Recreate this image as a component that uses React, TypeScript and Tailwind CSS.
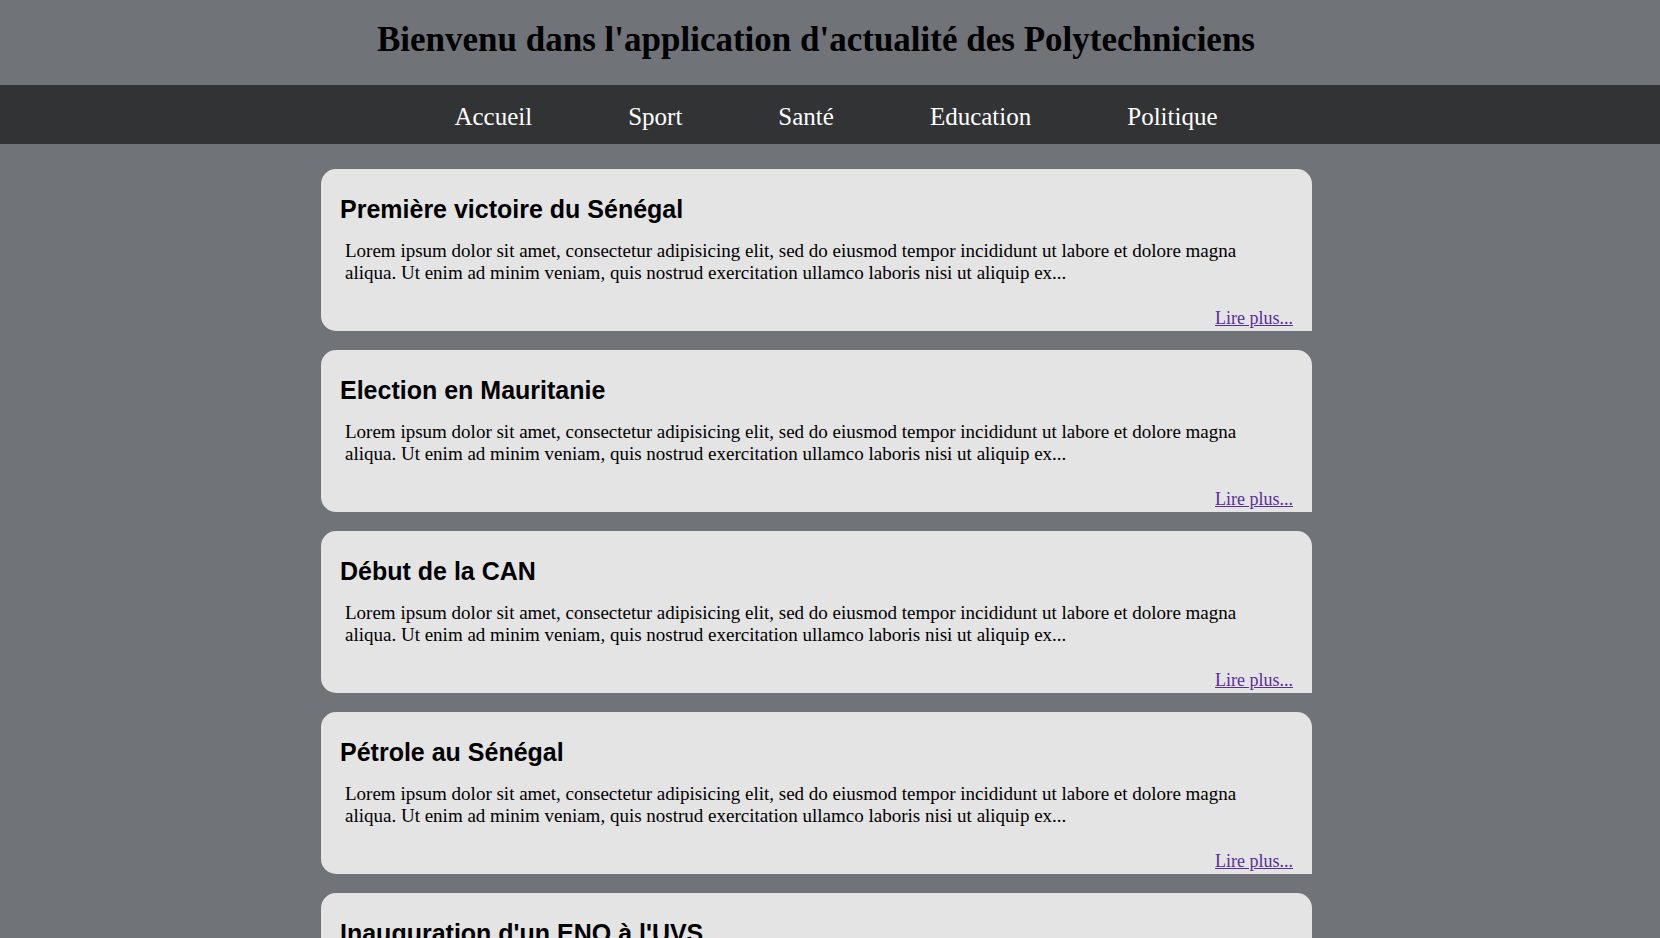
const articles = [
  "Première victoire du Sénégal",
  "Election en Mauritanie",
  "Début de la CAN",
  "Pétrole au Sénégal",
  "Inauguration d'un ENO à l'UVS",
];

const lorem =
  "Lorem ipsum dolor sit amet, consectetur adipisicing elit, sed do eiusmod tempor incididunt ut labore et dolore magna aliqua. Ut enim ad minim veniam, quis nostrud exercitation ullamco laboris nisi ut aliquip ex...";

const navLinks = ["Accueil", "Sport", "Santé", "Education", "Politique"];

function ArticleCard({ title }: { title: string }) {
  return (
    <div className="rounded-tl-[15px] rounded-tr-[15px] rounded-bl-[15px] bg-[#e4e4e4] pl-[19px] pr-[19px] pt-[26px] pb-[2px]">
      <h2 className="font-['Liberation_Sans',Arial,sans-serif] text-[25px] font-bold leading-[29px] text-black">
        {title}
      </h2>
      <p className="mt-[16px] pl-[5px] pr-[5px] font-['Liberation_Serif','Times_New_Roman',serif] text-[19px] leading-[22px] text-black">
        {lorem}
      </p>
      <div className="mt-[24px] text-right font-['Liberation_Serif','Times_New_Roman',serif] text-[18px] leading-[21px]">
        <a href="#" className="text-[#5a2e9a] underline">
          Lire plus...
        </a>
      </div>
    </div>
  );
}

export default function App() {
  return (
    <div className="min-h-screen bg-[#707378] font-['Liberation_Serif','Times_New_Roman',serif]">
      <header className="h-[85px] pt-[20px] pr-[28px] text-center">
        <h1 className="text-[35px] font-bold leading-[40px] text-black">
          Bienvenu dans l'application d'actualité des Polytechniciens
        </h1>
      </header>

      <nav className="h-[59px] bg-[#323335] pt-[17px] pl-[12px]">
        <ul className="flex justify-center gap-[96px]">
          {navLinks.map((link) => (
            <li key={link}>
              <a href="#" className="text-[25px] leading-[30px] text-white">
                {link}
              </a>
            </li>
          ))}
        </ul>
      </nav>

      <main className="ml-[321px] flex w-[991px] flex-col gap-[19px] pt-[25px] pb-[20px]">
        {articles.map((title) => (
          <ArticleCard key={title} title={title} />
        ))}
      </main>
    </div>
  );
}
